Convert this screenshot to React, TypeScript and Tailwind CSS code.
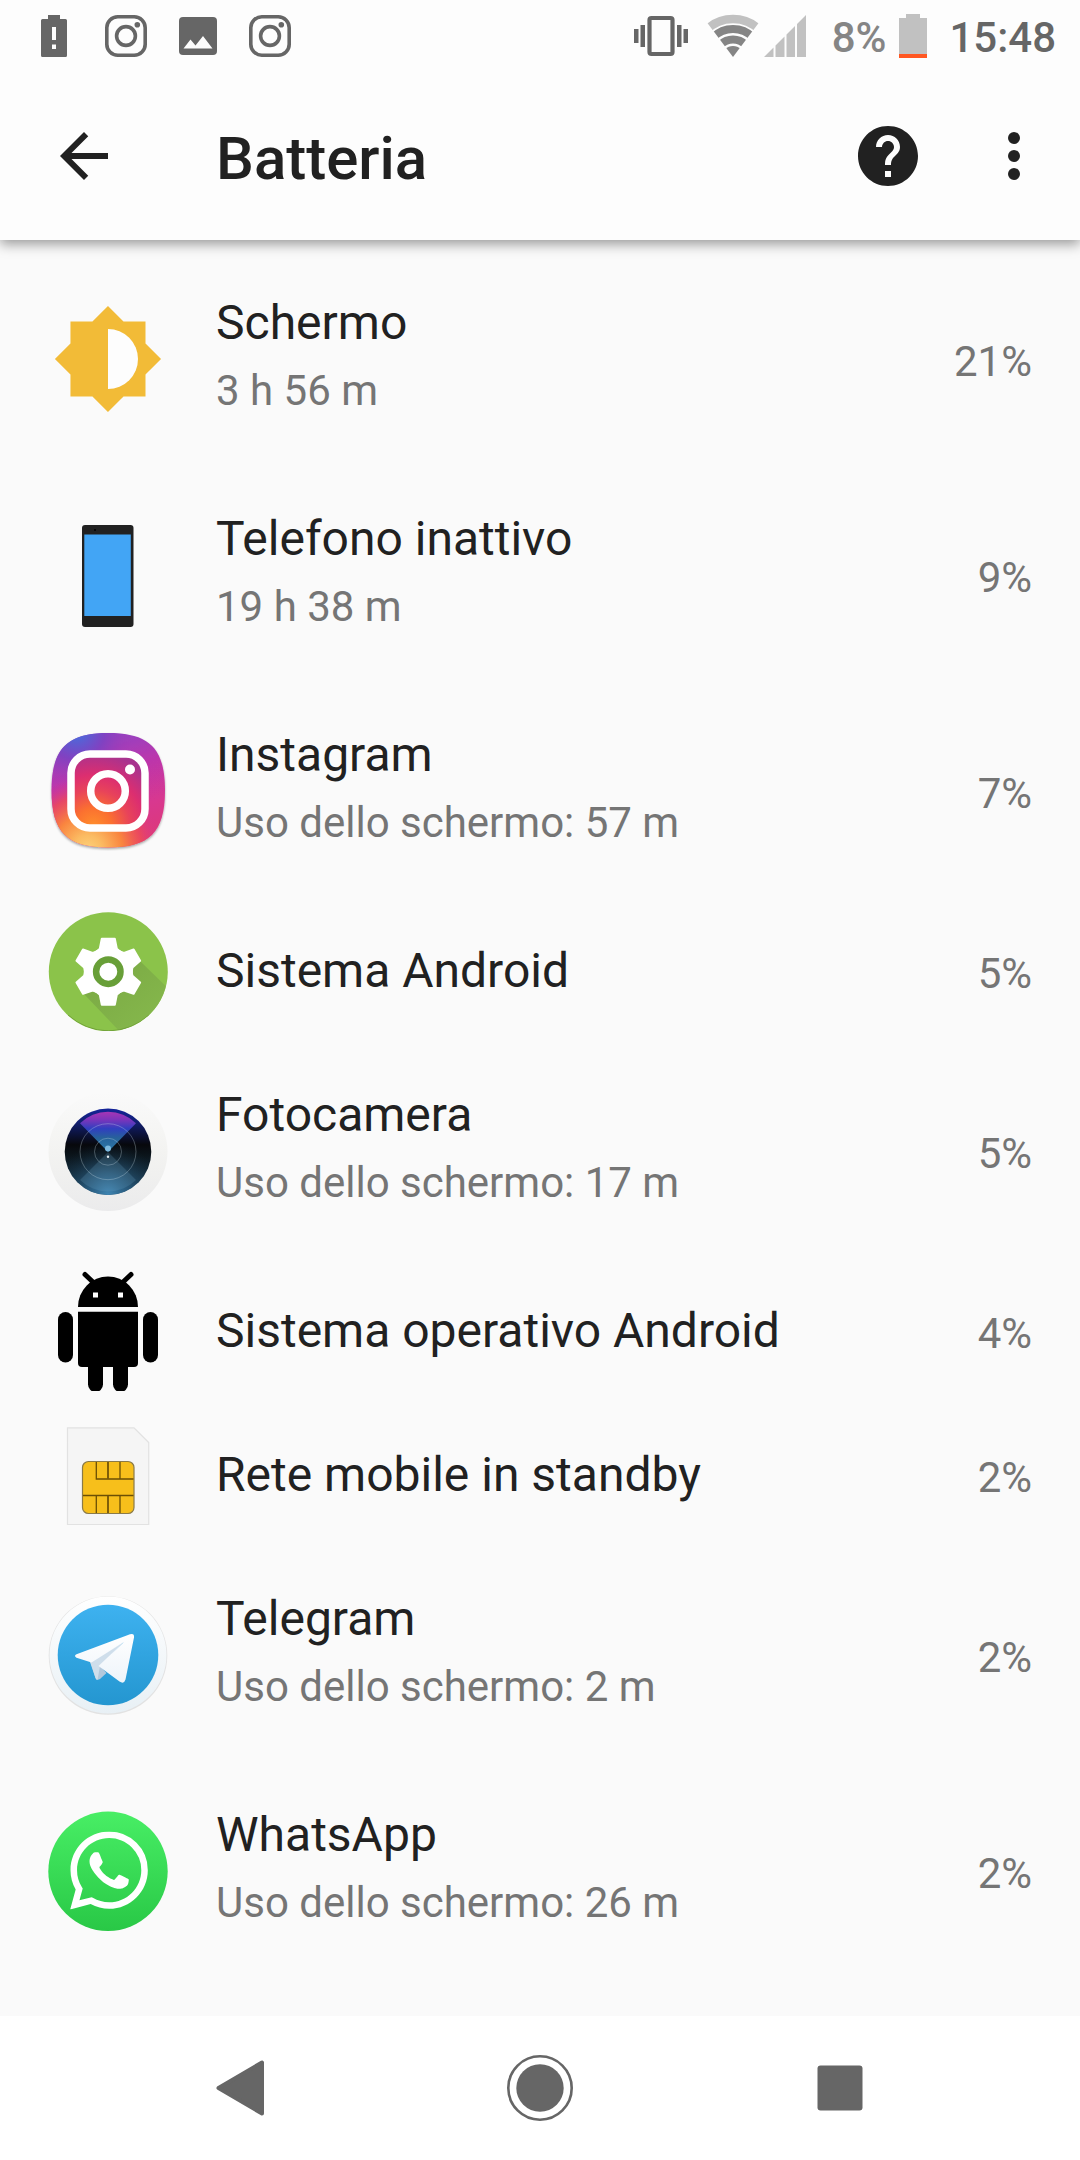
import React from 'react';
import { SiWhatsapp } from 'react-icons/si';

interface UsageItem {
  name: string;
  detail?: string;
  percent: string;
  icon: React.ReactNode;
}

const SQUIRCLE =
  'M60 2C101 2 117 17 117 59.5S101 116.5 60 116.5S3.5 101 3.5 59.5S19 2 60 2z';
const GEAR_TOOTH = 'M-6.5 -33H6.5L8.5 -23L14 -18H-14L-8.5 -23z';

function ScreenIcon() {
  return (
    <svg viewBox="0 0 120 120" className="size-full" aria-hidden="true">
      <path
        transform="translate(3.7 3.7) scale(4.69)"
        fill="#f2bb37"
        d="M20 15.31L23.31 12 20 8.69V4h-4.69L12 .69 8.69 4H4v4.69L.69 12 4 15.31V20h4.69L12 23.31 15.31 20H20z"
      />
      <path d="M60 30a30 30 0 0 1 0 60z" fill="#fdfdfd" />
    </svg>
  );
}

function PhoneIcon() {
  return (
    <svg viewBox="0 0 120 120" className="size-full" aria-hidden="true">
      <rect x="34" y="10" width="51.5" height="102" rx="3" fill="#212121" />
      <rect x="36.3" y="19.5" width="46.5" height="81.5" fill="#42a5f5" />
      <circle cx="47" cy="15" r="1" fill="#000" />
    </svg>
  );
}

function InstagramIcon() {
  return (
    <svg viewBox="0 0 120 120" className="size-full" aria-hidden="true">
      <defs>
        <linearGradient id="ig-base" x1="0.35" y1="0" x2="0.65" y2="1">
          <stop offset="0" stopColor="#8a45c8" />
          <stop offset="0.35" stopColor="#bb36ac" />
          <stop offset="0.7" stopColor="#d8378f" />
          <stop offset="1" stopColor="#dd3a78" />
        </linearGradient>
        <radialGradient id="ig-blue" cx="0.22" cy="-0.02" r="0.5">
          <stop offset="0" stopColor="#3f74e0" />
          <stop offset="0.5" stopColor="#7a42c2" stopOpacity="0.8" />
          <stop offset="1" stopColor="#a838b0" stopOpacity="0" />
        </radialGradient>
        <radialGradient id="ig-warm" cx="0.32" cy="1.02" r="0.64">
          <stop offset="0" stopColor="#fdd27a" />
          <stop offset="0.2" stopColor="#fbbb62" />
          <stop offset="0.48" stopColor="#f9853f" />
          <stop offset="0.75" stopColor="#ee4a58" stopOpacity="0.8" />
          <stop offset="1" stopColor="#d8378f" stopOpacity="0" />
        </radialGradient>
        <radialGradient id="ig-inner" cx="0.3" cy="0.98" r="1">
          <stop offset="0" stopColor="#ff8f2c" />
          <stop offset="0.25" stopColor="#fb7030" />
          <stop offset="0.5" stopColor="#e8435a" />
          <stop offset="0.7" stopColor="#dc2e70" />
          <stop offset="1" stopColor="#a8338f" />
        </radialGradient>
        <filter id="ig-shadow" x="-10%" y="-10%" width="120%" height="125%">
          <feDropShadow dx="0" dy="1.5" stdDeviation="1.2" floodOpacity="0.35" />
        </filter>
      </defs>
      <path d={SQUIRCLE} fill="url(#ig-base)" filter="url(#ig-shadow)" />
      <path d={SQUIRCLE} fill="url(#ig-blue)" />
      <path d={SQUIRCLE} fill="url(#ig-warm)" />
      <rect x="23" y="23" width="74" height="74" rx="19" fill="url(#ig-inner)" stroke="#fff" strokeWidth="7.5" />
      <circle cx="60" cy="60" r="17.3" fill="none" stroke="#fff" strokeWidth="7.5" />
      <circle cx="82" cy="38.5" r="5" fill="#fff" />
    </svg>
  );
}

function AndroidSystemIcon() {
  return (
    <svg viewBox="0 0 120 120" className="size-full" aria-hidden="true">
      <defs>
        <clipPath id="sys-clip">
          <circle cx="60.3" cy="60.7" r="59.3" />
        </clipPath>
        <linearGradient id="sys-shade" x1="0.2" y1="0.2" x2="0.75" y2="0.75">
          <stop offset="0" stopColor="#7cab45" />
          <stop offset="1" stopColor="#84b64b" />
        </linearGradient>
      </defs>
      <circle cx="60.3" cy="60.7" r="59.5" fill="#8bc34a" />
      <g clipPath="url(#sys-clip)">
        <path d="M35 82L92 50L125 82V125H76z" fill="url(#sys-shade)" />
        <path d="M20 104A59.5 59.5 0 0 0 101 104" fill="none" stroke="#6d9c38" strokeWidth="1" />
      </g>
      <g transform="translate(60.3 60.7)" fill="#fff" stroke="#fff" strokeWidth="2" strokeLinejoin="round">
        <circle r="23.5" />
        {[0, 60, 120, 180, 240, 300].map(angle => (
          <path key={angle} transform={`rotate(${angle})`} d={GEAR_TOOTH} />
        ))}
      </g>
      <circle cx="60.3" cy="60.7" r="12.2" fill="#fff" stroke="#689f38" strokeWidth="6.5" />
    </svg>
  );
}

function CameraIcon() {
  return (
    <svg viewBox="0 0 120 120" className="size-full" aria-hidden="true">
      <defs>
        <linearGradient id="cam-rim" x1="0" y1="0" x2="0" y2="1">
          <stop offset="0" stopColor="#fafafa" />
          <stop offset="0.5" stopColor="#f3f3f1" />
          <stop offset="1" stopColor="#ebebec" />
        </linearGradient>
        <linearGradient id="cam-dark" x1="0" y1="0" x2="0" y2="1">
          <stop offset="0" stopColor="#14249a" />
          <stop offset="0.15" stopColor="#121f74" />
          <stop offset="0.42" stopColor="#07080c" />
          <stop offset="0.55" stopColor="#0b151c" />
          <stop offset="1" stopColor="#1f4a68" />
        </linearGradient>
        <radialGradient id="cam-glow" cx="0.5" cy="1" r="0.62">
          <stop offset="0" stopColor="#3f86b4" />
          <stop offset="0.4" stopColor="#2d6287" stopOpacity="0.7" />
          <stop offset="1" stopColor="#152b3a" stopOpacity="0" />
        </radialGradient>
        <linearGradient id="cam-beam" x1="0" y1="0" x2="0" y2="1">
          <stop offset="0" stopColor="#a635b5" />
          <stop offset="0.2" stopColor="#7a35bb" />
          <stop offset="0.42" stopColor="#303fc0" />
          <stop offset="0.65" stopColor="#27629a" />
          <stop offset="1" stopColor="#2e7ba8" />
        </linearGradient>
      </defs>
      <circle cx="60" cy="60.5" r="59.5" fill="url(#cam-rim)" />
      <circle cx="60" cy="60.7" r="43.3" fill="url(#cam-dark)" />
      <circle cx="60" cy="60.7" r="43.3" fill="url(#cam-glow)" />
      <path d="M60 61L32 89A40 40 0 0 0 88 89z" fill="#6fa3c4" opacity="0.22" />
      <path d="M60 61L32 32.3A40 40 0 0 1 88 32.3z" fill="url(#cam-beam)" />
      <circle cx="60" cy="60.7" r="28" fill="none" stroke="#cfe3f0" strokeWidth="1" opacity="0.3" />
      <circle cx="60" cy="60.7" r="13.5" fill="none" stroke="#cfe3f0" strokeWidth="1" opacity="0.3" />
      <circle cx="60" cy="57.5" r="3" fill="#7db9de" />
      <circle cx="60" cy="65.7" r="1.2" fill="#e6eef2" />
    </svg>
  );
}

function AndroidIcon() {
  return (
    <svg viewBox="0 0 120 120" className="size-full" aria-hidden="true">
      <path d="M37 3.5L46 12M83 3.5L74 12" stroke="#000" strokeWidth="5" strokeLinecap="round" />
      <path d="M30 36A30 30.5 0 0 1 90 36z" />
      <rect x="45" y="21.5" width="5" height="5" fill="#fff" />
      <rect x="70" y="21.5" width="5" height="5" fill="#fff" />
      <path d="M30 40.7H90V92a4 4 0 0 1 -4 4H34a4 4 0 0 1 -4 -4z" />
      <rect x="10" y="41" width="15" height="50.5" rx="7.5" />
      <rect x="95" y="41" width="15" height="50.5" rx="7.5" />
      <rect x="40" y="80" width="15" height="41" rx="7.5" />
      <rect x="65" y="80" width="15" height="41" rx="7.5" />
    </svg>
  );
}

function SimIcon() {
  return (
    <svg viewBox="0 0 120 120" className="size-full" aria-hidden="true">
      <path d="M19.5 12.8H86L100.7 27.5V109.5H19.5z" fill="#f5f5f5" stroke="#e2e2e2" strokeWidth="1.2" />
      <rect x="34.5" y="46.5" width="51.5" height="52" rx="6" fill="#f7bf1b" stroke="#8a7a48" strokeWidth="1.2" />
      <path d="M48.3 47V64H85.5M35 80.5H85.5M48.3 81V98M72 47V64M72 81V98" fill="none" stroke="#6b4f05" strokeWidth="1.3" />
      <path d="M60 47V64M60 81V98" stroke="#7a5a08" strokeWidth="1.9" />
    </svg>
  );
}

function TelegramIcon() {
  return (
    <svg viewBox="0 0 120 120" className="size-full" aria-hidden="true">
      <defs>
        <linearGradient id="tg-rim" x1="0" y1="0" x2="0" y2="1">
          <stop offset="0" stopColor="#ffffff" />
          <stop offset="1" stopColor="#e8f0f5" />
        </linearGradient>
        <linearGradient id="tg-blue" x1="0" y1="0" x2="0" y2="1">
          <stop offset="0" stopColor="#3eb2f0" />
          <stop offset="1" stopColor="#2496d0" />
        </linearGradient>
        <linearGradient id="tg-wing" x1="0" y1="0" x2="0" y2="1">
          <stop offset="0" stopColor="#ffffff" />
          <stop offset="1" stopColor="#eef4fa" />
        </linearGradient>
      </defs>
      <circle cx="60" cy="60.5" r="59.3" fill="#e2e2e2" />
      <circle cx="60" cy="60" r="58.5" fill="url(#tg-rim)" />
      <circle cx="60" cy="60" r="50.3" fill="url(#tg-blue)" />
      <path d="M42.5 67L47.5 83Q49 86 52 84L58.5 78L52 71z" fill="#b3c8dc" />
      <path d="M42 67L77 46L52 71L49.5 85Q48 85 47.5 83z" fill="#cfdeeb" />
      <path
        d="M28.5 59.3L82 39.3Q86.5 38 86 42.5L77.5 84.5Q76 89.5 71.5 86.5L50.5 71L76 47L43.5 67.5L28.5 62.8Q25.5 61 28.5 59.3z"
        fill="url(#tg-wing)"
      />
    </svg>
  );
}

function WhatsAppIcon() {
  return (
    <svg viewBox="0 0 120 120" className="size-full" aria-hidden="true">
      <defs>
        <linearGradient id="wa-green" x1="0" y1="0" x2="0" y2="1">
          <stop offset="0" stopColor="#48ee65" />
          <stop offset="1" stopColor="#29c846" />
        </linearGradient>
      </defs>
      <circle cx="60" cy="60.3" r="59.7" fill="url(#wa-green)" />
      <SiWhatsapp x="22" y="20.5" size={78} color="#fff" />
    </svg>
  );
}

const items: UsageItem[] = [
  { name: 'Schermo', detail: '3 h 56 m', percent: '21%', icon: <ScreenIcon /> },
  { name: 'Telefono inattivo', detail: '19 h 38 m', percent: '9%', icon: <PhoneIcon /> },
  { name: 'Instagram', detail: 'Uso dello schermo: 57 m', percent: '7%', icon: <InstagramIcon /> },
  { name: 'Sistema Android', percent: '5%', icon: <AndroidSystemIcon /> },
  { name: 'Fotocamera', detail: 'Uso dello schermo: 17 m', percent: '5%', icon: <CameraIcon /> },
  { name: 'Sistema operativo Android', percent: '4%', icon: <AndroidIcon /> },
  { name: 'Rete mobile in standby', percent: '2%', icon: <SimIcon /> },
  { name: 'Telegram', detail: 'Uso dello schermo: 2 m', percent: '2%', icon: <TelegramIcon /> },
  { name: 'WhatsApp', detail: 'Uso dello schermo: 26 m', percent: '2%', icon: <WhatsAppIcon /> },
];

function InstagramGlyph() {
  return (
    <svg viewBox="0 0 72 72" className="size-18" fill="none" stroke="#666" aria-hidden="true">
      <rect x="16.8" y="16.8" width="38.4" height="38.4" rx="11" strokeWidth="3.6" />
      <circle cx="36" cy="36" r="9.4" strokeWidth="3.6" />
      <circle cx="47.3" cy="24.7" r="2.8" fill="#666" stroke="none" />
    </svg>
  );
}

function StatusBar() {
  return (
    <div className="flex h-18 items-center justify-between pl-[18px] pr-6">
      <div className="flex">
        <svg viewBox="0 0 72 72" className="size-18" aria-hidden="true">
          <path
            fill="#666"
            fillRule="evenodd"
            d="M30 15h12v4h5.5a1.5 1.5 0 0 1 1.5 1.5v35a1.5 1.5 0 0 1 -1.5 1.5h-23a1.5 1.5 0 0 1 -1.5 -1.5v-35a1.5 1.5 0 0 1 1.5 -1.5h5.5zM34 27v13h4V27zM34 44.5v4.5h4v-4.5z"
          />
        </svg>
        <InstagramGlyph />
        <svg viewBox="0 0 72 72" className="size-18" aria-hidden="true">
          <rect x="17" y="17" width="38" height="38" rx="4" fill="#666" />
          <path d="M21.5 48.5L28.5 39.5L33.5 45.5L41 36L50.5 48.5z" fill="#fdfdfd" />
        </svg>
        <InstagramGlyph />
      </div>
      <div className="flex items-center">
        <svg viewBox="0 0 54 72" className="mr-[19px] h-18 w-[54px]" fill="#666" aria-hidden="true">
          <rect x="15.5" y="18" width="23" height="36" rx="2" fill="none" stroke="#666" strokeWidth="4.2" />
          <path d="M0 29h4.5v14H0zM6.5 25H11v22H6.5zM43 25h4.5v22H43zM49.5 29H54v14h-4.5z" />
        </svg>
        <svg viewBox="0 0 52 72" className="mr-[5px] h-18 w-[52px]" aria-hidden="true">
          <defs>
            <clipPath id="wifi-wedge">
              <path d="M26 57L-6.5 14V0H58.5V14z" />
            </clipPath>
          </defs>
          <g clipPath="url(#wifi-wedge)" fill="none" strokeWidth="8">
            <circle cx="26" cy="57" r="38" stroke="#c1c1c1" strokeWidth="8.5" />
            <circle cx="26" cy="57" r="28" stroke="#858585" />
            <circle cx="26" cy="57" r="17.5" stroke="#858585" />
            <circle cx="26" cy="57" r="11" fill="#858585" stroke="none" />
          </g>
        </svg>
        <svg viewBox="0 0 42 72" className="mr-[26px] h-18 w-[42px]" fill="#c1c1c1" aria-hidden="true">
          <path d="M0 57L9.500 47.5V57zM11.500 57V45.5L20.500 36.5V57zM22.500 57V34.5L31 26V57zM33 57V24L42 15V57z" />
        </svg>
        <span className="mr-[13px] pt-1 text-[42px] leading-[72px] font-medium text-[#858585]">8%</span>
        <svg viewBox="0 0 28 72" className="mr-[22px] h-18 w-7" aria-hidden="true">
          <path d="M7 14h14v4h7v36H0V18h7z" fill="#c1c1c1" />
          <rect y="54" width="28" height="4" fill="#ff5722" />
        </svg>
        <span className="pt-1 text-[42px] leading-[72px] font-medium text-[#666]">15:48</span>
      </div>
    </div>
  );
}

export default function App() {
  return (
    <div className="flex min-h-screen flex-col bg-[#fafafa] font-[Roboto,sans-serif] text-[#212121]">
      <header className="bg-[#fdfdfd] shadow-[0_4px_12px_rgba(0,0,0,0.4)]">
        <StatusBar />
        <div className="flex h-[168px] items-center pr-[30px] pl-12">
          <button aria-label="Indietro" className="size-18">
            <svg viewBox="0 0 24 24" className="size-full" fill="#212121" aria-hidden="true">
              <path d="M20 11H7.83l5.59-5.59L12 4l-8 8 8 8 1.41-1.41L7.83 13H20v-2z" />
            </svg>
          </button>
          <h1 className="ml-24 flex-1 pt-1.5 text-[60px] leading-[72px] font-medium">Batteria</h1>
          <button aria-label="Guida" className="mr-[54px] size-18">
            <svg viewBox="0 0 24 24" className="size-full" fill="#212121" aria-hidden="true">
              <path d="M12 2C6.48 2 2 6.48 2 12s4.48 10 10 10 10-4.48 10-10S17.52 2 12 2zm1 17h-2v-2h2v2zm2.07-7.75l-.9.92C13.45 12.9 13 13.5 13 15h-2v-.5c0-1.1.45-2.1 1.17-2.83l1.24-1.26c.37-.36.59-.86.59-1.41 0-1.1-.9-2-2-2s-2 .9-2 2H8c0-2.21 1.79-4 4-4s4 1.79 4 4c0 .88-.36 1.68-.93 2.25z" />
            </svg>
          </button>
          <button aria-label="Altre opzioni" className="size-18">
            <svg viewBox="0 0 24 24" className="size-full" fill="#212121" aria-hidden="true">
              <circle cx="12" cy="6" r="2" />
              <circle cx="12" cy="12" r="2" />
              <circle cx="12" cy="18" r="2" />
            </svg>
          </button>
        </div>
      </header>

      <main className="flex-1 pt-[11px]">
        <ul>
          {items.map(item => (
            <li key={item.name}>
              <button className={`flex w-full items-center px-12 text-left ${item.detail ? 'h-[216px]' : 'h-36'}`}>
                <span className="size-[120px] shrink-0">{item.icon}</span>
                <span className="ml-12 flex min-w-0 flex-1 flex-col">
                  <span className="text-5xl leading-[64px]">{item.name}</span>
                  {item.detail && <span className="text-[42px] leading-[72px] text-[#757575]">{item.detail}</span>}
                </span>
                <span className="pt-1.5 text-[42px] leading-[72px] text-[#757575]">{item.percent}</span>
              </button>
            </li>
          ))}
        </ul>
      </main>

      <nav className="flex h-36 items-center bg-white px-[90px]">
        <button aria-label="Indietro" className="flex flex-1 justify-center">
          <svg viewBox="0 0 72 72" className="size-18" aria-hidden="true">
            <path d="M14.5 36L58 10.5V61.5z" fill="#666" stroke="#666" strokeWidth="4" strokeLinejoin="round" />
          </svg>
        </button>
        <button aria-label="Home" className="flex flex-1 justify-center">
          <svg viewBox="0 0 72 72" className="size-18" aria-hidden="true">
            <circle cx="36" cy="36" r="31.7" fill="none" stroke="#666" strokeWidth="2.6" />
            <circle cx="36" cy="36" r="23.7" fill="#666" />
          </svg>
        </button>
        <button aria-label="Recenti" className="flex flex-1 justify-center">
          <svg viewBox="0 0 72 72" className="size-18" aria-hidden="true">
            <rect x="13.5" y="13.5" width="45" height="45" rx="3" fill="#666" />
          </svg>
        </button>
      </nav>
    </div>
  );
}
